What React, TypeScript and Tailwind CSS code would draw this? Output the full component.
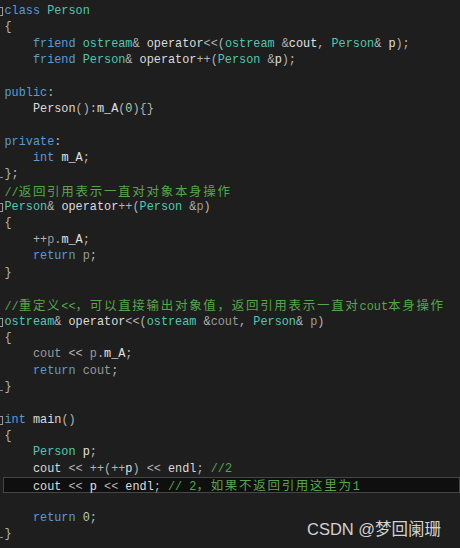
import React from "react";

const K = "text-[#569cd6]";
const T = "text-[#4ec9b0]";
const X = "text-[#dcdcdc]";
const O = "text-[#b4b4b4]";
const P = "text-[#9a9a9a]";
const F = "text-[#e2e2e2]";
const C = "text-[#57a64a]";
const N = "text-[#b5cea8]";

type Tok = [string, string];

interface Line {
  toks: Tok[];
  open?: boolean;
  close?: boolean;
  active?: boolean;
}

const sp: Tok = [X, " "];
const ind: Tok = [X, "    "];

const LINES: Line[] = [
  { open: true, toks: [[K, "class"], sp, [T, "Person"]] },
  { toks: [[O, "{"]] },
  { toks: [ind, [K, "friend"], sp, [T, "ostream"], [O, "&"], sp, [X, "operator"], [O, "<<("], [T, "ostream"], sp, [O, "&"], [F, "cout"], [O, ","], sp, [T, "Person"], [O, "&"], sp, [F, "p"], [O, ");"]] },
  { toks: [ind, [K, "friend"], sp, [T, "Person"], [O, "&"], sp, [X, "operator"], [O, "++("], [T, "Person"], sp, [O, "&"], [F, "p"], [O, ");"]] },
  { toks: [] },
  { toks: [[K, "public"], [O, ":"]] },
  { toks: [ind, [X, "Person"], [O, "():"], [F, "m_A"], [O, "("], [N, "0"], [O, "){}"]] },
  { toks: [] },
  { toks: [[K, "private"], [O, ":"]] },
  { toks: [ind, [K, "int"], sp, [F, "m_A"], [O, ";"]] },
  { close: true, toks: [[O, "};"]] },
  { toks: [[C, "//返回引用表示一直对对象本身操作"]] },
  { open: true, toks: [[T, "Person"], [O, "&"], sp, [X, "operator"], [O, "++("], [T, "Person"], sp, [O, "&"], [P, "p"], [O, ")"]] },
  { toks: [[O, "{"]] },
  { toks: [ind, [O, "++"], [P, "p"], [O, "."], [F, "m_A"], [O, ";"]] },
  { toks: [ind, [K, "return"], sp, [P, "p"], [O, ";"]] },
  { toks: [[O, "}"]] },
  { toks: [] },
  { toks: [[C, "//重定义<<，可以直接输出对象值，返回引用表示一直对cout本身操作"]] },
  { open: true, toks: [[T, "ostream"], [O, "&"], sp, [X, "operator"], [O, "<<("], [T, "ostream"], sp, [O, "&"], [P, "cout"], [O, ","], sp, [T, "Person"], [O, "&"], sp, [P, "p"], [O, ")"]] },
  { toks: [[O, "{"]] },
  { toks: [ind, [P, "cout"], sp, [O, "<<"], sp, [P, "p"], [O, "."], [F, "m_A"], [O, ";"]] },
  { toks: [ind, [K, "return"], sp, [P, "cout"], [O, ";"]] },
  { close: true, toks: [[O, "}"]] },
  { toks: [] },
  { open: true, toks: [[K, "int"], sp, [X, "main"], [O, "()"]] },
  { toks: [[O, "{"]] },
  { toks: [ind, [T, "Person"], sp, [F, "p"], [O, ";"]] },
  { toks: [ind, [X, "cout"], sp, [O, "<<"], sp, [O, "++(++"], [F, "p"], [O, ")"], sp, [O, "<<"], sp, [X, "endl"], [O, ";"], sp, [C, "//2"]] },
  { active: true, toks: [ind, [X, "cout"], sp, [O, "<<"], sp, [F, "p"], sp, [O, "<<"], sp, [X, "endl"], [O, ";"], sp, [C, "// 2，如果不返回引用这里为1"]] },
  { toks: [] },
  { toks: [ind, [K, "return"], sp, [N, "0"], [O, ";"]] },
  { close: true, toks: [[O, "}"]] },
];

const CJK = /([\u3000-\u303f\u4e00-\u9fff\uff00-\uffef]+)/;

function Text({ cls, text }: { cls: string; text: string }) {
  const parts = text.split(CJK).filter((s) => s.length > 0);
  return (
    <span className={cls}>
      {parts.map((s, i) =>
        CJK.test(s) ? (
          <span key={i} className="font-['Noto_Sans_CJK_SC',sans-serif] text-[12.5px] tracking-[1.7px]">
            {s}
          </span>
        ) : (
          <span key={i}>{s}</span>
        )
      )}
    </span>
  );
}

function Gutter({ line }: { line: Line }) {
  return (
    <div className="flex w-[3px] shrink-0 flex-col items-start">
      {line.open && <div className="mt-[4px] h-[9px] w-[3px] border-y border-r border-[#9a9a9a]" />}
      {line.close && <div className="mt-[11px] h-px w-[3px] bg-[#8a8a8a]" />}
    </div>
  );
}

export default function App() {
  return (
    <div className="relative h-[548px] w-[460px] overflow-hidden bg-[#1e1e1e] pt-[3px]">
      {LINES.map((line, i) => (
        <div key={i} className="flex h-[16.35px]">
          <Gutter line={line} />
          <div
            className={
              line.active
                ? "flex-1 whitespace-pre border border-[#464646] bg-[#0f0f0f] pl-[0.5px] font-['Liberation_Mono',monospace] text-[11.85px] leading-[14.35px]"
                : "flex-1 whitespace-pre border border-transparent pl-[0.5px] font-['Liberation_Mono',monospace] text-[11.85px] leading-[14.35px]"
            }
          >
            {line.toks.map(([cls, text], j) => (
              <Text key={j} cls={cls} text={text} />
            ))}
          </div>
        </div>
      ))}
      <div className="absolute left-[307px] top-[521px] whitespace-nowrap font-['Liberation_Sans','Noto_Sans_CJK_SC',sans-serif] text-[16.5px] leading-[16.5px] text-[#d2d2d2]">
        CSDN @梦回阑珊
      </div>
    </div>
  );
}
